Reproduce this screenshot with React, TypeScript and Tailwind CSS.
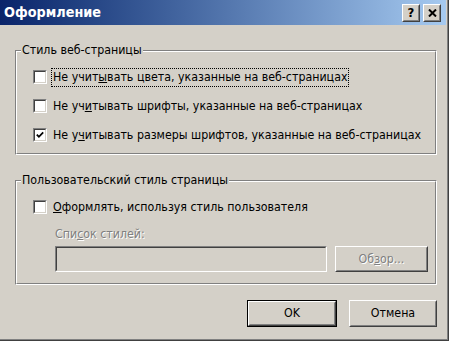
import React from "react";

function Check({ checked }: { checked?: boolean }) {
  return (
    <div className="w-[14px] h-[14px] shrink-0 border border-t-[#808080] border-l-[#808080] border-r-white border-b-white">
      <div className="w-full h-full bg-white border border-t-[#404040] border-l-[#404040] border-r-[#d4d0c8] border-b-[#d4d0c8] flex items-center justify-center">
        {checked && (
          <svg width="8" height="8" viewBox="0 0 8 8">
            <polyline points="0.8,3.6 2.9,5.8 7.2,1.4" fill="none" stroke="#000" strokeWidth="1.8" />
          </svg>
        )}
      </div>
    </div>
  );
}

function Group({ title, children }: { title: string; children: React.ReactNode }) {
  return (
    <div className="relative h-[105px] border border-t-[#808080] border-l-[#808080] border-r-white border-b-white">
      <div className="h-full border border-t-white border-l-white border-r-[#808080] border-b-[#808080]">
        {children}
      </div>
      <div className="absolute left-[5px] top-[-8px] px-[1px] bg-[#d4d0c8] leading-[14px] whitespace-nowrap">{title}</div>
    </div>
  );
}

function Btn({ children, def, w }: { children: React.ReactNode; def?: boolean; w: string }) {
  return (
    <div className={`${w} h-[27px] ${def ? "border border-black" : ""}`}>
      <div className="h-full border border-t-white border-l-white border-r-[#404040] border-b-[#404040]">
        <div className="h-full border border-t-[#d4d0c8] border-l-[#d4d0c8] border-r-[#808080] border-b-[#808080] flex items-center justify-center">
          <span>{children}</span>
        </div>
      </div>
    </div>
  );
}

export default function App() {
  return (
    <div className="w-[449px] h-[341px] bg-[#d4d0c8] pr-[3px] pb-[3px] shadow-[inset_-1px_-1px_0_#404040,inset_-2px_-2px_0_#808080] flex flex-col font-['DejaVu_Sans_Condensed','DejaVu_Sans',sans-serif] text-[12.3px] text-black overflow-hidden whitespace-nowrap">
      <div className="h-[25px] shrink-0 bg-gradient-to-r from-[#0a246a] to-[#a6caf0] flex items-center pl-[4px] pr-[5px]">
        <span className="text-white font-bold text-[14.3px] leading-none">Оформление</span>
        <div className="ml-auto flex gap-[3px]">
          <div className="w-[18px] h-[18px] border border-t-white border-l-white border-r-[#404040] border-b-[#404040]">
            <div className="h-full border border-t-[#d4d0c8] border-l-[#d4d0c8] border-r-[#808080] border-b-[#808080] bg-[#d4d0c8] flex items-center justify-center font-bold text-[13px] leading-none">
              ?
            </div>
          </div>
          <div className="w-[18px] h-[18px] border border-t-white border-l-white border-r-[#404040] border-b-[#404040]">
            <div className="h-full border border-t-[#d4d0c8] border-l-[#d4d0c8] border-r-[#808080] border-b-[#808080] bg-[#d4d0c8] flex items-center justify-center">
              <svg width="9" height="8" viewBox="0 0 9 8">
                <path d="M1 0.5 L8 7.5 M8 0.5 L1 7.5" stroke="#000" strokeWidth="2" />
              </svg>
            </div>
          </div>
        </div>
      </div>

      <div className="flex flex-col pl-[15px] pr-[9px]">
        <div className="mt-[25px]">
          <Group title="Стиль веб-страницы">
            <div className="flex flex-col gap-[9px] pt-[15px] pl-[16px]">
              <div className="h-[20px] flex items-center">
                <Check />
                <span className="ml-[4px] px-[1px] border border-dotted border-black leading-[17px]">
                  Не учит<span className="underline">ы</span>вать цвета, указанные на веб-страницах
                </span>
              </div>
              <div className="h-[20px] flex items-center">
                <Check />
                <span className="ml-[5px] px-[1px] leading-[17px]">
                  Не уч<span className="underline">и</span>тывать шрифты, указанные на веб-страницах
                </span>
              </div>
              <div className="h-[20px] flex items-center">
                <Check checked />
                <span className="ml-[5px] px-[1px] leading-[17px]">
                  Не у<span className="underline">ч</span>итывать размеры шрифтов, указанные на веб-страницах
                </span>
              </div>
            </div>
          </Group>
        </div>

        <div className="mt-[25px]">
          <Group title="Пользовательский стиль страницы">
            <div className="flex flex-col pt-[15px] pl-[16px]">
              <div className="h-[20px] flex items-center">
                <Check />
                <span className="ml-[5px] px-[1px] leading-[17px]">
                  <span className="underline">О</span>формлять, используя стиль пользователя
                </span>
              </div>
              <div className="mt-[10px] ml-[22px] leading-[15px] text-[#808080] [text-shadow:1px_1px_0_#fff]">
                Спи<span className="underline">с</span>ок стилей:
              </div>
              <div className="mt-[4px] ml-[22px] flex gap-[8px]">
                <div className="w-[272px] h-[26px] border border-t-[#808080] border-l-[#808080] border-r-white border-b-white">
                  <div className="h-full border border-t-[#404040] border-l-[#404040] border-r-[#d4d0c8] border-b-[#d4d0c8] bg-[#d4d0c8]" />
                </div>
                <div className="h-[26px] w-[93px]">
                  <div className="h-full border border-t-white border-l-white border-r-[#404040] border-b-[#404040]">
                    <div className="h-full border border-t-[#d4d0c8] border-l-[#d4d0c8] border-r-[#808080] border-b-[#808080] flex items-center justify-center">
                      <span className="text-[#808080] [text-shadow:1px_1px_0_#fff]">
                        Об<span className="underline">з</span>ор...
                      </span>
                    </div>
                  </div>
                </div>
              </div>
            </div>
          </Group>
        </div>

        <div className="mt-[15px] flex justify-end gap-[12px]">
          <Btn def w="w-[90px]">OK</Btn>
          <Btn w="w-[88px]">Отмена</Btn>
        </div>
      </div>
    </div>
  );
}
